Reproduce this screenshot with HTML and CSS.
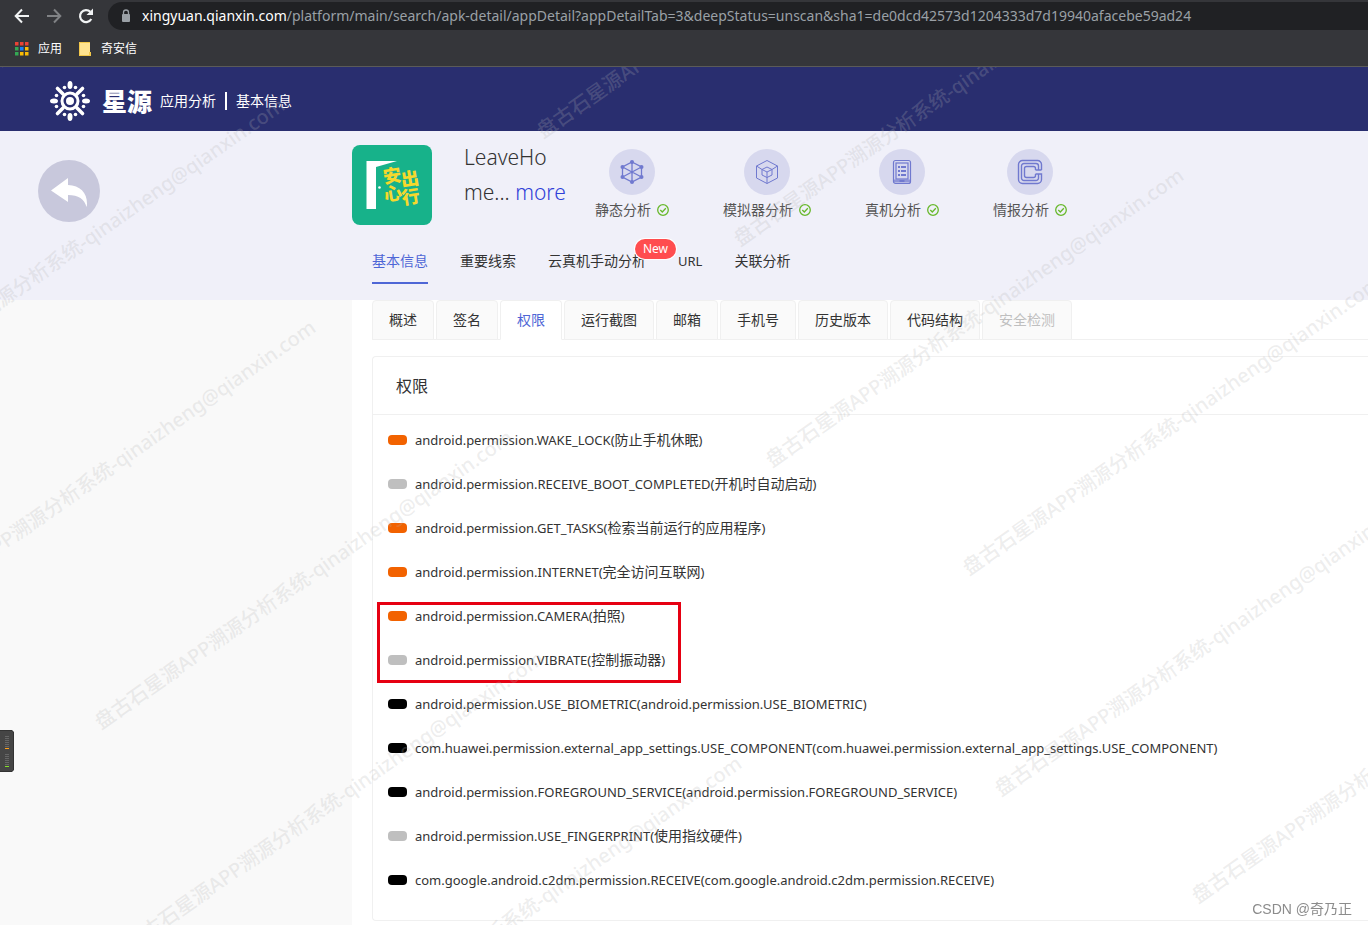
FILE: index.html
```html
<!DOCTYPE html>
<html lang="zh-CN">
<head>
<meta charset="utf-8">
<title>星源 应用分析</title>
<link rel="stylesheet" href="styles.css">
</head>
<body>
<div class="browser">
  <div class="toolbar">
    <button class="tool" aria-label="后退"><svg width="16" height="16" viewBox="0 0 16 16" fill="none" stroke="#f1f3f4" stroke-width="2"><path d="M15 8H2M8 1.500L1.700 8L8 14.500"/></svg></button>
    <button class="tool" aria-label="前进"><svg width="16" height="16" viewBox="0 0 16 16" fill="none" stroke="#808285" stroke-width="2"><path d="M1 8H14M8 1.500L14.300 8L8 14.500"/></svg></button>
    <button class="tool" aria-label="刷新"><svg width="16" height="16" viewBox="0 0 16 16"><path d="M13.300 11A6 6 0 1 1 12.300 3.800" fill="none" stroke="#f1f3f4" stroke-width="2.200"/><path d="M15 0.500V7H8.500Z" fill="#f1f3f4"/></svg></button>
    <div class="address">
      <svg width="10" height="14" viewBox="0 0 10 14"><rect x="1" y="5" width="8" height="8" rx="1" fill="#9aa0a6"/><path d="M2.500 6V3.500a2.500 2.500 0 0 1 5 0V6" fill="none" stroke="#9aa0a6" stroke-width="1.300"/></svg>
      <span class="url"><span class="host">xingyuan.qianxin.com</span>/platform/main/search/apk-detail/appDetail?appDetailTab=3&amp;deepStatus=unscan&amp;sha1=de0dcd42573d1204333d7d19940afacebe59ad24</span>
    </div>
  </div>
  <div class="bookmarks">
    <a class="bookmark" href="#"><svg width="14" height="14" viewBox="0 0 14 14"><path fill="#ea4335" d="M0 0h3.500v3.500H0zM5 0h3.500v3.500H5zM10 0h3.500v3.500H10z"/><path fill="#34a853" d="M0 5h3.500v3.500H0zM0 10h3.500v3.500H0z"/><path fill="#1a82f7" d="M5 5h3.500v3.500H5z"/><path fill="#fbbc04" d="M10 5h3.500v3.500H10zM5 10h3.500v3.500H5zM10 10h3.500v3.500H10z"/></svg>应用</a>
    <a class="bookmark" href="#"><svg width="14" height="14" viewBox="0 0 14 14"><path fill="#ffe390" d="M1 0h11v14H1z"/><path fill="#f3c84b" d="M1 0h11v1H1zM1 0h1v14H1zM1 13h11v1H1zM11 10h2v4h-2z"/></svg>奇安信</a>
  </div>
</div>

<div class="page">
  <header class="masthead">
    <svg class="emblem" width="40" height="40" viewBox="-20 -20 40 40" fill="#fff">
      <circle r="4"/><circle r="8" fill="none" stroke="#fff" stroke-width="3"/>
      <g stroke="#fff" stroke-width="3.600" stroke-linecap="round"><path d="M7 7L12.500 12.500M-7 7L-12.500 12.500M7 -7L12.500 -12.500M-7 -7L-12.500 -12.500"/></g>
      <g><ellipse cy="-16" rx="2.500" ry="4"/><ellipse cy="16" rx="2.500" ry="4"/><ellipse cx="-16" rx="4" ry="2.500"/><ellipse cx="16" rx="4" ry="2.500"/></g>
      <g><circle cx="5.500" cy="-13.500" r="1.800"/><circle cx="-5.500" cy="-13.500" r="1.800"/><circle cx="5.500" cy="13.500" r="1.800"/><circle cx="-5.500" cy="13.500" r="1.800"/><circle cx="13.500" cy="-5.500" r="1.800"/><circle cx="-13.500" cy="-5.500" r="1.800"/><circle cx="13.500" cy="5.500" r="1.800"/><circle cx="-13.500" cy="5.500" r="1.800"/></g>
    </svg>
    <span class="brand">星源</span>
    <span class="crumb">应用分析</span>
    <span class="crumb-bar"></span>
    <span class="crumb">基本信息</span>
  </header>

  <section class="summary">
    <button class="back" aria-label="返回"><svg width="62" height="62" viewBox="0 0 62 62"><path fill="#fff" d="M13 30.500L30 18v7c12 .5 19 7.500 19 18.500c0 1.500-.2 2.500-.5 3.500c-2-8-8-11.800-18.500-12v7z"/></svg></button>
    <div class="summary-main">
      <div class="app">
        <svg class="app-icon" width="80" height="80" viewBox="0 0 80 80">
          <rect width="80" height="80" rx="8" fill="#17b28a"/>
          <path fill="#fff" d="M14.500 16H45L24 22V64H14.500Z"/><circle cx="27.500" cy="42.500" r="1.300" fill="#fff"/>
          <g class="app-art" transform="rotate(-9 48 42)"><text x="33" y="36">安</text><text x="31" y="54">心</text><text x="50" y="42">出</text><text x="48" y="60">行</text></g>
        </svg>
        <div class="app-name">LeaveHo<br>me... <a class="more" href="#">more</a></div>
        <div class="checks">
          <div class="check"><span class="disc"><svg width="26" height="26" viewBox="0 0 26 26" fill="none" stroke="#7079cf" stroke-width="1.300"><path d="M13 3L22.500 8V18L13 23L3.500 18V8ZM13 3V23M3.500 8L22.500 18M22.500 8L3.500 18"/><g fill="#7079cf" stroke="none"><circle cx="13" cy="3" r="2"/><circle cx="13" cy="23" r="2"/><circle cx="3.500" cy="8" r="2"/><circle cx="22.500" cy="8" r="2"/><circle cx="3.500" cy="18" r="2"/><circle cx="22.500" cy="18" r="2"/></g></svg></span><span class="check-label">静态分析<svg class="ok" width="12" height="12" viewBox="0 0 12 12"><circle cx="6" cy="6" r="5.300"/><path d="M3.300 6L5.300 8L8.800 4.200"/></svg></span></div>
          <div class="check"><span class="disc"><svg width="26" height="26" viewBox="0 0 26 26" fill="none" stroke="#7079cf" stroke-width="1"><path d="M13 1.500L23.500 7V19L13 24.500L2.500 19V7ZM13 8L18 10.500V16L13 18.500L8 16V10.500ZM8 10.500L13 13L18 10.500M13 13V24.500M2.500 7L8 10.500M23.500 7L18 10.500"/></svg></span><span class="check-label">模拟器分析<svg class="ok" width="12" height="12" viewBox="0 0 12 12"><circle cx="6" cy="6" r="5.300"/><path d="M3.300 6L5.300 8L8.800 4.200"/></svg></span></div>
          <div class="check"><span class="disc"><svg width="26" height="26" viewBox="0 0 26 26" fill="none" stroke="#7079cf" stroke-width="1.200"><rect x="4.500" y="1.500" width="17" height="23" rx="2"/><rect x="7" y="4" width="12" height="16"/><path d="M5 22h16" stroke-width="3" opacity=".7"/><path d="M9 8h2M12 8h5M9 12h2M12 12h5M9 16h2M12 16h5" stroke-width="1.800"/><path d="M10.500 22h5" stroke-width="2"/></svg></span><span class="check-label">真机分析<svg class="ok" width="12" height="12" viewBox="0 0 12 12"><circle cx="6" cy="6" r="5.300"/><path d="M3.300 6L5.300 8L8.800 4.200"/></svg></span></div>
          <div class="check"><span class="disc"><svg width="26" height="26" viewBox="0 0 26 26" fill="none" stroke="#7079cf" stroke-width="1.400"><path d="M24.500 11V5.500a4 4 0 0 0-4-4h-15a4 4 0 0 0-4 4v15a4 4 0 0 0 4 4h15a4 4 0 0 0 4-4V15H18.500M24.500 11H18.500M21.500 11V7a2.500 2.500 0 0 0-2.500-2.500H7A2.500 2.500 0 0 0 4.500 7v12A2.500 2.500 0 0 0 7 21.500h12A2.500 2.500 0 0 0 21.500 19V15M18.500 11V9.500a2 2 0 0 0-2-2h-7a2 2 0 0 0-2 2v7a2 2 0 0 0 2 2h7a2 2 0 0 0 2-2V15"/></svg></span><span class="check-label">情报分析<svg class="ok" width="12" height="12" viewBox="0 0 12 12"><circle cx="6" cy="6" r="5.300"/><path d="M3.300 6L5.300 8L8.800 4.200"/></svg></span></div>
        </div>
      </div>
      <nav class="sections">
        <a class="section current" href="#">基本信息</a>
        <a class="section" href="#">重要线索</a>
        <a class="section" href="#">云真机手动分析<span class="badge">New</span></a>
        <a class="section latin" href="#">URL</a>
        <a class="section" href="#">关联分析</a>
      </nav>
    </div>
  </section>

  <div class="content">
    <aside class="side"></aside>
    <main class="main">
      <div class="tabs" role="tablist">
        <button class="tab" role="tab">概述</button>
        <button class="tab" role="tab">签名</button>
        <button class="tab active" role="tab" aria-selected="true">权限</button>
        <button class="tab" role="tab">运行截图</button>
        <button class="tab" role="tab">邮箱</button>
        <button class="tab" role="tab">手机号</button>
        <button class="tab" role="tab">历史版本</button>
        <button class="tab" role="tab">代码结构</button>
        <button class="tab" role="tab" disabled>安全检测</button>
      </div>
      <section class="card">
        <h2 class="card-title">权限</h2>
        <ul class="perms">
          <li class="perm"><i class="pill warn"></i><span>android.permission.WAKE_LOCK(<span class="zh">防止手机休眠</span>)</span></li>
          <li class="perm"><i class="pill mild"></i><span>android.permission.RECEIVE_BOOT_COMPLETED(<span class="zh">开机时自动启动</span>)</span></li>
          <li class="perm"><i class="pill warn"></i><span>android.permission.GET_TASKS(<span class="zh">检索当前运行的应用程序</span>)</span></li>
          <li class="perm"><i class="pill warn"></i><span>android.permission.INTERNET(<span class="zh">完全访问互联网</span>)</span></li>
          <li class="perm marked"><i class="pill warn"></i><span>android.permission.CAMERA(<span class="zh">拍照</span>)</span></li>
          <li class="perm"><i class="pill mild"></i><span>android.permission.VIBRATE(<span class="zh">控制振动器</span>)</span></li>
          <li class="perm"><i class="pill"></i><span>android.permission.USE_BIOMETRIC(android.permission.USE_BIOMETRIC)</span></li>
          <li class="perm"><i class="pill"></i><span>com.huawei.permission.external_app_settings.USE_COMPONENT(com.huawei.permission.external_app_settings.USE_COMPONENT)</span></li>
          <li class="perm"><i class="pill"></i><span>android.permission.FOREGROUND_SERVICE(android.permission.FOREGROUND_SERVICE)</span></li>
          <li class="perm"><i class="pill mild"></i><span>android.permission.USE_FINGERPRINT(<span class="zh">使用指纹硬件</span>)</span></li>
          <li class="perm"><i class="pill"></i><span>com.google.android.c2dm.permission.RECEIVE(com.google.android.c2dm.permission.RECEIVE)</span></li>
        </ul>
      </section>
    </main>
  </div>

  <svg class="watermark" aria-hidden="true">
    <g>
      <text transform="translate(-325 224) rotate(-35)">盘古石星源APP溯源分析系统-qinaizheng@qianxin.com</text>
      <text transform="translate(-127 331) rotate(-35)">盘古石星源APP溯源分析系统-qinaizheng@qianxin.com</text>
      <text transform="translate(-96 553) rotate(-35)">盘古石星源APP溯源分析系统-qinaizheng@qianxin.com</text>
      <text transform="translate(101 663) rotate(-35)">盘古石星源APP溯源分析系统-qinaizheng@qianxin.com</text>
      <text transform="translate(132 884) rotate(-35)">盘古石星源APP溯源分析系统-qinaizheng@qianxin.com</text>
      <text transform="translate(330 989) rotate(-35)">盘古石星源APP溯源分析系统-qinaizheng@qianxin.com</text>
      <text transform="translate(543 72) rotate(-35)">盘古石星源APP溯源分析系统-qinaizheng@qianxin.com</text>
      <text transform="translate(740 180) rotate(-35)">盘古石星源APP溯源分析系统-qinaizheng@qianxin.com</text>
      <text transform="translate(772 401) rotate(-35)">盘古石星源APP溯源分析系统-qinaizheng@qianxin.com</text>
      <text transform="translate(969 509) rotate(-35)">盘古石星源APP溯源分析系统-qinaizheng@qianxin.com</text>
      <text transform="translate(1001 730) rotate(-35)">盘古石星源APP溯源分析系统-qinaizheng@qianxin.com</text>
      <text transform="translate(1198 837) rotate(-35)">盘古石星源APP溯源分析系统-qinaizheng@qianxin.com</text>
    </g>
  </svg>
</div>

<svg class="meter" width="14" height="42" viewBox="0 0 14 42" aria-hidden="true"><path fill="#333" d="M0 0h12l2 2v38l-2 2H0z"/><path fill="#454545" d="M0 1h12l1 1v38l-1 1H0z"/><path fill="#666" d="M5 6h4v1H5zM5 8h4v1H5zM5 10h4v1H5zM5 12h4v1H5zM5 14h4v1H5zM5 16h4v1H5zM5 24h4v1H5zM5 26h4v1H5zM5 28h4v1H5zM5 30h4v1H5zM5 32h4v1H5zM5 34h4v1H5z"/><path fill="#ffa019" d="M5 18h4v1H5z"/><path fill="#84e02b" d="M5 36h4v1H5z"/></svg>
<div class="credit">CSDN @奇乃正</div>
</body>
</html>
```
FILE: styles.css
```css
*, *::after { box-sizing: border-box; }
body {
  margin: 0;
  min-height: 100vh;
  display: flex;
  flex-direction: column;
  overflow: hidden;
  background: #fff;
  color: #333;
  font: 14px/22px "Noto Sans", "Noto Sans CJK SC", sans-serif;
}
a { color: inherit; text-decoration: none; }
button { font: inherit; color: inherit; border: 0; padding: 0; background: none; }
svg { display: block; flex: none; }

.browser { background: #35363a; border-bottom: 1px solid #5b5b58; color: #fff; }
.toolbar { display: flex; align-items: center; gap: 16px; height: 32px; padding-left: 14px; }
.address {
  flex: 1;
  min-width: 0;
  display: flex;
  align-items: center;
  gap: 11px;
  height: 28px;
  margin-left: -2px;
  padding-left: 13px;
  border-radius: 14px 0 0 14px;
  background: #202124;
}
.url { color: #9aa0a6; font-size: 14px; white-space: nowrap; }
.host { color: #fff; }
.bookmarks { display: flex; align-items: center; gap: 16px; height: 34px; padding-left: 15px; font-size: 12px; }
.bookmark { display: flex; align-items: center; gap: 9px; }

.page { position: relative; flex: 1; display: flex; flex-direction: column; }
.masthead { display: flex; align-items: center; height: 64px; padding: 3px 0 0 50px; background: #292e6f; color: #fff; }
.brand { margin: 0 8px 0 12px; font-size: 25px; font-weight: 900; line-height: 32px; }
.crumb-bar { width: 2px; height: 18px; margin: 0 9px; background: #fff; }

.summary { display: flex; height: 169px; background: #f0f0f9; }
.back { width: 62px; height: 62px; margin: 29px 252px 0 38px; border-radius: 50%; background: #c8c8dc; flex: none; }
.summary-main { flex: 1; min-width: 0; }
.app { display: flex; height: 108px; padding-top: 14px; }
.app-art { fill: #f6d82c; font-size: 18px; font-weight: 900; }
.app-name { width: 131px; margin-left: 32px; margin-top: -5px; font-size: 21px; font-weight: 300; line-height: 35px; white-space: nowrap; }
.more { color: #2f3fd8; }
.checks { display: flex; gap: 54px; padding-top: 4px; }
.check { display: flex; flex-direction: column; align-items: center; gap: 4px; color: #555; }
.disc { display: grid; place-items: center; width: 46px; height: 46px; border-radius: 50%; background: #d7d8ee; }
.check-label { display: flex; align-items: center; gap: 6px; }
.ok { fill: none; stroke: #67b82b; stroke-width: 1.3; }

.sections { display: flex; gap: 32px; height: 45px; margin-left: 20px; }
.section { position: relative; height: 45px; line-height: 44px; }
.latin { font-size: 13px; }
.current { color: #4e66d6; border-bottom: 2px solid #4e66d6; }
.badge {
  position: absolute;
  right: -30px;
  top: 0;
  padding: 0 8px;
  border-radius: 10px;
  background: #ff4d4f;
  box-shadow: 0 0 0 1px #fff;
  color: #fff;
  font-size: 12px;
  line-height: 20px;
}

.content { flex: 1; display: flex; }
.side { width: 352px; flex: none; background: #f9f9f9; }
.main { flex: 1; min-width: 0; padding-left: 20px; }
.tabs { display: flex; gap: 2px; height: 40px; border-bottom: 1px solid #f0f0f0; }
.tab { height: 40px; padding: 0 16px; border: 1px solid #f0f0f0; border-radius: 4px 4px 0 0; background: #fafafa; }
.tab.active { border-bottom-color: #fff; background: #fff; color: #4e66d6; }
.tab:disabled { color: #bfbfbf; }
.card { margin-top: 16px; border: 1px solid #f0f0f0; border-right: 0; border-radius: 4px 0 0 4px; }
.card-title { margin: 0; padding: 17px 23px 16px; border-bottom: 1px solid #f0f0f0; font-size: 16px; font-weight: 400; line-height: 24px; }
.perms { margin: 0; padding: 3px 15px 18px; list-style: none; }
.perm { position: relative; display: flex; align-items: center; gap: 8px; height: 44px; font-size: 13px; white-space: nowrap; }
.zh { font-size: 14px; }
.pill { width: 19px; height: 10px; border-radius: 4px; background: #000; }
.warn { background: #f26200; }
.mild { background: #bfbfbf; }
.marked::after {
  content: "";
  position: absolute;
  left: -11px;
  top: 8px;
  width: 304px;
  height: 81px;
  border: 3px solid #e60012;
}

.watermark { position: absolute; inset: 0; width: 100%; height: 100%; pointer-events: none; fill: rgba(180, 180, 180, .23); font-size: 20px; font-weight: 500; }
.meter { position: fixed; left: 0; top: 730px; }
.credit { position: fixed; right: 16px; bottom: 5px; color: #8c8c8c; font-family: "Liberation Sans", "Noto Sans CJK SC", sans-serif; font-size: 14px; }
```
